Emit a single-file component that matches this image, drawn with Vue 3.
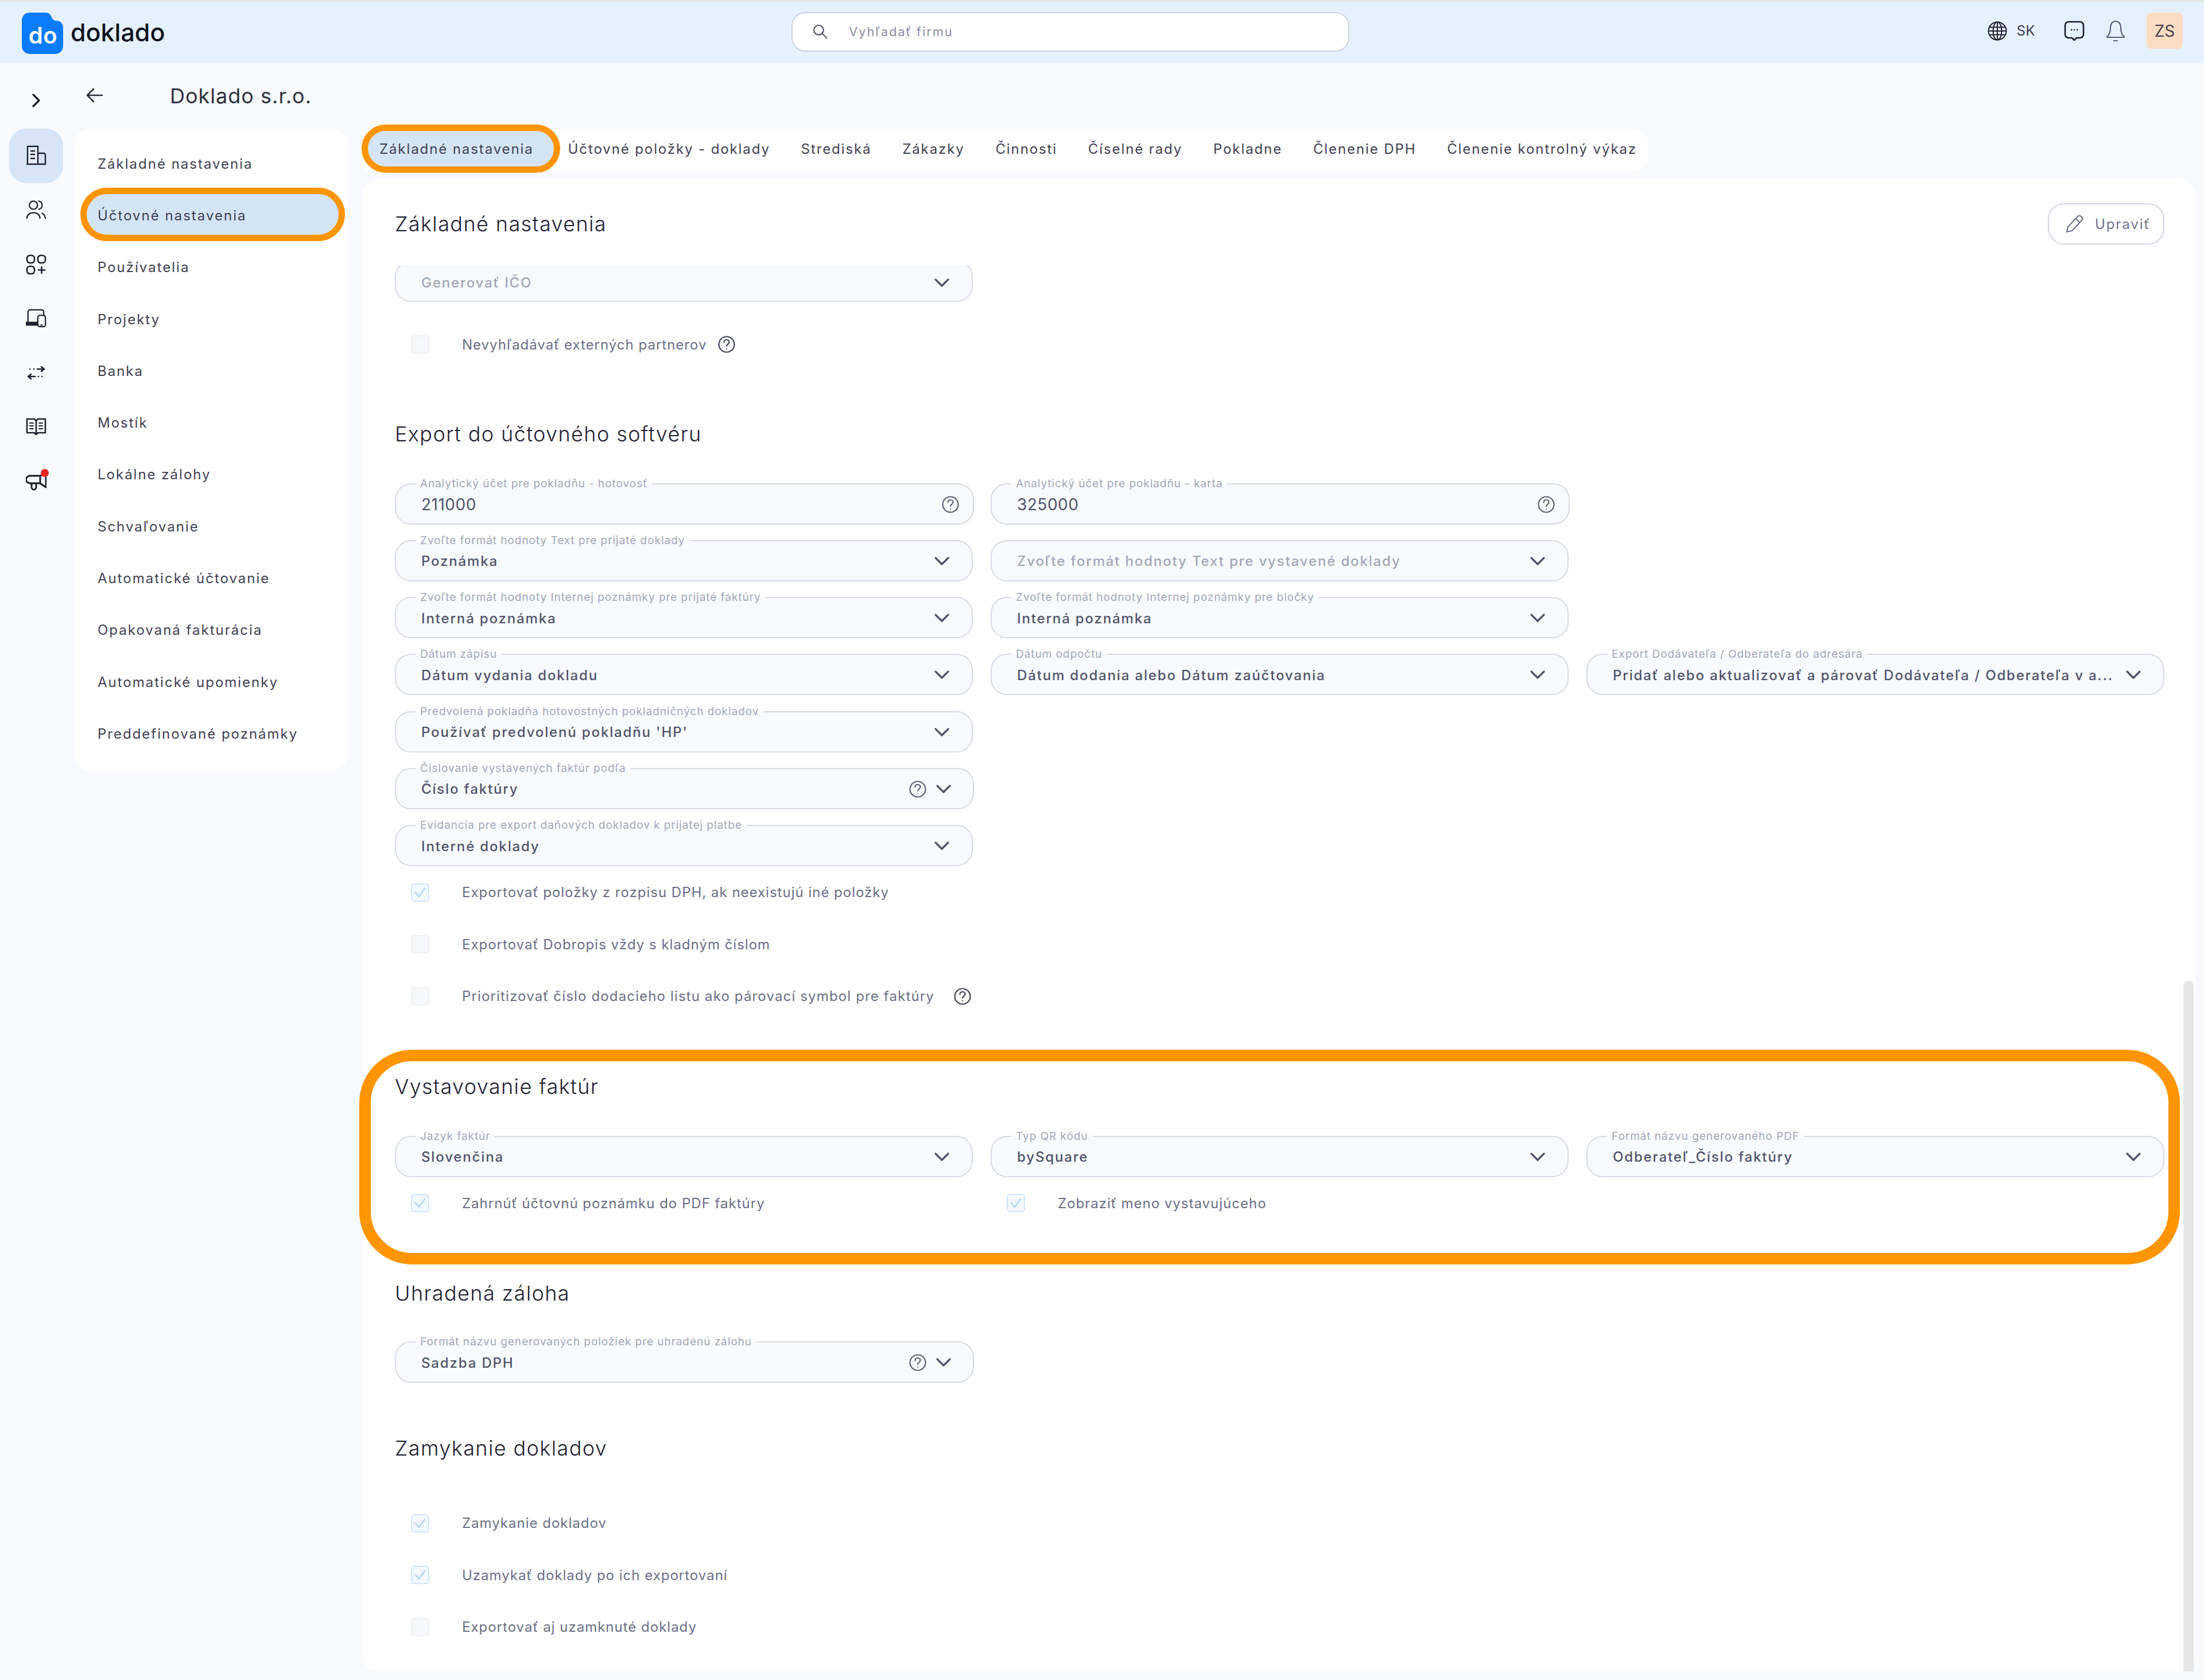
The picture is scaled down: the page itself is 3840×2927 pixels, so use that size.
<script setup>
const menu = ['Základné nastavenia','Účtovné nastavenia','Používatelia','Projekty','Banka','Mostík','Lokálne zálohy','Schvaľovanie','Automatické účtovanie','Opakovaná fakturácia','Automatické upomienky','Preddefinované poznámky']
const tabs = ['Základné nastavenia','Účtovné položky - doklady','Strediská','Zákazky','Činnosti','Číselné rady','Pokladne','Členenie DPH','Členenie kontrolný výkaz']
const sections = [
  { key:'a', rows:[[{ value:'Generovať IČO', muted:true }]], checks:[[{ text:'Nevyhľadávať externých partnerov', help:true }]] },
  { key:'b', title:'Export do účtovného softvéru', rows:[
    [{ label:'Analytický účet pre pokladňu - hotovosť', value:'211000', input:true, help:true },{ label:'Analytický účet pre pokladňu - karta', value:'325000', input:true, help:true }],
    [{ label:'Zvoľte formát hodnoty Text pre prijaté doklady', value:'Poznámka' },{ value:'Zvoľte formát hodnoty Text pre vystavené doklady', muted:true }],
    [{ label:'Zvoľte formát hodnoty Internej poznámky pre prijaté faktúry', value:'Interná poznámka' },{ label:'Zvoľte formát hodnoty Internej poznámky pre bločky', value:'Interná poznámka' }],
    [{ label:'Dátum zápisu', value:'Dátum vydania dokladu' },{ label:'Dátum odpočtu', value:'Dátum dodania alebo Dátum zaúčtovania' },{ label:'Export Dodávateľa / Odberateľa do adresára', value:'Pridať alebo aktualizovať a párovať Dodávateľa / Odberateľa v a...' }],
    [{ label:'Predvolená pokladňa hotovostných pokladničných dokladov', value:"Používať predvolenú pokladňu 'HP'" }],
    [{ label:'Číslovanie vystavených faktúr podľa', value:'Číslo faktúry', help:true }],
    [{ label:'Evidancia pre export daňových dokladov k prijatej platbe', value:'Interné doklady' }],
  ], checks:[
    [{ text:'Exportovať položky z rozpisu DPH, ak neexistujú iné položky', on:true }],
    [{ text:'Exportovať Dobropis vždy s kladným číslom' }],
    [{ text:'Prioritizovať číslo dodacieho listu ako párovací symbol pre faktúry', help:true, far:true }],
  ]},
  { key:'c', title:'Vystavovanie faktúr', rows:[
    [{ label:'Jazyk faktúr', value:'Slovenčina' },{ label:'Typ QR kódu', value:'bySquare' },{ label:'Formát názvu generovaného PDF', value:'Odberateľ_Číslo faktúry' }],
  ], checks:[[{ text:'Zahrnúť účtovnú poznámku do PDF faktúry', on:true },{ text:'Zobraziť meno vystavujúceho', on:true }]] },
  { key:'d', title:'Uhradená záloha', rows:[[{ label:'Formát názvu generovaných položiek pre uhradenú zálohu', value:'Sadzba DPH', help:true }]], checks:[] },
  { key:'e', title:'Zamykanie dokladov', rows:[], checks:[
    [{ text:'Zamykanie dokladov', on:true }],[{ text:'Uzamykať doklady po ich exportovaní', on:true }],[{ text:'Exportovať aj uzamknuté doklady' }],
  ]},
]
</script>

<template>
  <div class="page">
    <header class="top">
      <div class="brand">
        <div class="logo">
          <svg viewBox="0 0 72 72"><path fill="#0b7bfb" d="M14 0h28c6 0 8 4 10 8 2 4 4 6 8 6 7 0 12 5 12 12v32c0 8-6 14-14 14H14C6 72 0 66 0 58V14C0 6 6 0 14 0z"/></svg>
          <span>do</span>
        </div>
        <span class="brand-name">doklado</span>
      </div>
      <div class="search">
        <svg class="search-ico" viewBox="0 0 32 32" fill="none" stroke="#4b4e63" stroke-width="2.4" stroke-linecap="round"><circle cx="13" cy="13" r="9.5"/><path d="M20 20l9 9"/></svg>
        <span>Vyhľadať firmu</span>
      </div>
      <div class="top-right">
        <svg class="globe" viewBox="0 0 34 34" fill="none" stroke="#20222e" stroke-width="2"><circle cx="17" cy="17" r="15.5"/><ellipse cx="17" cy="17" rx="7.5" ry="15.5"/><path d="M17 1.5v31M3 10.5h28M3 23.5h28M1.5 17h31"/></svg>
        <span class="lang">SK</span>
        <svg class="chat" viewBox="0 0 36 36" fill="none" stroke="#1c1e29" stroke-width="2.6" stroke-linejoin="round"><path d="M8 2h20a6 6 0 0 1 6 6v16a6 6 0 0 1-6 6h-6l-4 4-4-4H8a6 6 0 0 1-6-6V8a6 6 0 0 1 6-6z"/><path d="M13 16h.1M18 16h.1M23 16h.1" stroke-linecap="round"/></svg>
        <svg class="bell" viewBox="0 0 34 38" fill="none" stroke="#5d6178" stroke-width="2.2" stroke-linejoin="round" stroke-linecap="round"><path d="M17 2c-6 0-9 5-9 11 0 8-2 13-6 16v1h30v-1c-4-3-6-8-6-16 0-6-3-11-9-11z"/><path d="M14 36h6"/></svg>
        <div class="avatar">ZS</div>
      </div>
    </header>

    <div class="below">
      <nav class="rail">
        <svg class="rail-chev" viewBox="0 0 20 30" fill="none" stroke="#1f2130" stroke-width="3.4" stroke-linecap="round" stroke-linejoin="round"><path d="M5 5l10 10L5 25"/></svg>
        <div class="rail-item active">
          <svg viewBox="0 0 36 36" fill="none" stroke="#1f2130" stroke-width="2.4" stroke-linejoin="round"><path d="M3 33V2h18v31" fill="#e4ecf9"/><path d="M21 14h10a3 3 0 0 1 3 3v16M1 33h34"/><path d="M9 10h6M9 16h6M9 23h6" stroke-linecap="round"/></svg>
        </div>
        <div class="rail-item">
          <svg viewBox="0 0 38 36" fill="none" stroke="#1f2130" stroke-width="2.4" stroke-linecap="round"><circle cx="14" cy="9" r="7.5"/><path d="M24 1.500c4 1 6 4 6 7.500s-2 6.500-6 7.500M2 33c0-6 5-10 12-10s12 4 12 10M30 24c3 1 5 4 6 9"/></svg>
        </div>
        <div class="rail-item">
          <svg viewBox="0 0 36 36" fill="none" stroke="#1f2130" stroke-width="2.6" stroke-linecap="round"><rect x="2" y="2" width="13" height="13" rx="5"/><rect x="21" y="2" width="13" height="13" rx="5"/><rect x="2" y="21" width="13" height="13" rx="5"/><path d="M27.500 22v11M22 27.500h11"/></svg>
        </div>
        <div class="rail-item">
          <svg viewBox="0 0 38 36" fill="none" stroke="#1f2130" stroke-width="2.4" stroke-linejoin="round"><path d="M4 25V6a4 4 0 0 1 4-4h21a4 4 0 0 1 4 4v6"/><rect x="1" y="25" width="21" height="5" fill="#1f2130"/><rect x="22" y="12" width="14" height="21" rx="4" fill="#f8fafd"/><path d="M27 30h4"/></svg>
        </div>
        <div class="rail-item">
          <svg viewBox="0 0 36 36" fill="none" stroke="#1f2130" stroke-width="2.6" stroke-linecap="round" stroke-linejoin="round"><path d="M7 11h.1M14 11h.1M20 11h11M27 7l5 4-5 4M28 24h.1M22 24h.1M16 24H5M9 20l-5 4 5 4"/></svg>
        </div>
        <div class="rail-item book">
          <svg viewBox="0 0 36 32" fill="none" stroke="#1f2130" stroke-width="2.6" stroke-linejoin="round" stroke-linecap="round"><path d="M2 3h13l3 3 3-3h13v24H21l-3 3-3-3H2zM18 6v24"/><path d="M7 10h6M7 15h6M7 20h6M23 10h6M23 15h6M23 20h6" stroke-width="2.2"/></svg>
        </div>
        <div class="rail-item">
          <svg viewBox="0 0 36 36" fill="none" stroke="#14151f" stroke-width="2.8" stroke-linejoin="round" stroke-linecap="round"><path d="M7 8h18v13H7a6.500 6.500 0 0 1 0-13zM25 8l10-4v24l-10-7M10 21v7a4 4 0 0 0 8 0v-7"/></svg>
          <span class="dot"></span>
        </div>
      </nav>

      <div class="work">
        <div class="crumb">
          <svg class="back" viewBox="0 0 30 28" fill="none" stroke="#2a2c3a" stroke-width="2.6" stroke-linecap="round" stroke-linejoin="round"><path d="M28 14H3M13 3L2 14l11 11"/></svg>
          <span class="crumb-title">Doklado s.r.o.</span>
        </div>
        <div class="panes">
          <aside class="menu">
            <div v-for="(m, i) in menu" :key="m" class="menu-item" :class="{ on: i === 1 }">{{ m }}</div>
          </aside>
          <div class="right">
            <div class="tabs">
              <div v-for="(t, i) in tabs" :key="t" class="tab" :class="{ on: i === 0 }">{{ t }}</div>
            </div>
            <main class="card">
              <div class="card-head">
                <h1 class="h">Základné nastavenia</h1>
                <button class="edit">
                  <svg viewBox="0 0 32 32" fill="none" stroke="#6f7288" stroke-width="2.2" stroke-linejoin="round"><path d="M22 3c2-2 5-1 7 1s2 4 0 6L12 28l-9 2 2-9z"/><path d="M19 7l6 6"/></svg>
                  <span>Upraviť</span>
                </button>
              </div>
              <div class="scroll">
                <section v-for="s in sections" :key="s.key" class="sec" :class="'sec-' + s.key">
                  <h2 v-if="s.title" class="h sec-title">{{ s.title }}</h2>
                  <div v-if="s.rows.length" class="rows">
                    <div v-for="(r, ri) in s.rows" :key="ri" class="row">
                      <fieldset v-for="f in r" :key="f.value + f.label" class="field" :class="{ 'is-input': f.input, 'has-help': f.help }">
                        <legend v-if="f.label">{{ f.label }}</legend>
                        <legend v-else class="no-label"></legend>
                        <span class="val" :class="{ muted: f.muted, big: f.input }">{{ f.value }}</span>
                        <svg v-if="f.help" class="help" viewBox="0 0 30 30" fill="none" stroke="#5c5f75" stroke-width="2.2" stroke-linecap="round"><circle cx="15" cy="15" r="13.500"/><path d="M10.500 11.500c0-3 2-4.500 4.500-4.500s4.500 1.600 4.500 4c0 3.500-4.500 3.600-4.500 7"/><path d="M15 22.500v.1"/></svg>
                        <svg v-if="!f.input" class="chev" viewBox="0 0 28 18" fill="none" stroke="#4f5268" stroke-width="3.2" stroke-linecap="round" stroke-linejoin="round"><path d="M3 3l11 11L25 3"/></svg>
                      </fieldset>
                    </div>
                  </div>
                  <div v-if="s.checks.length" class="checks">
                    <div v-for="(r, ri) in s.checks" :key="ri" class="row">
                      <div v-for="c in r" :key="c.text" class="check">
                        <span class="box" :class="{ on: c.on }">
                          <svg v-if="c.on" viewBox="0 0 28 28" fill="none" stroke="#b5d5fb" stroke-width="2.6" stroke-linecap="round" stroke-linejoin="round"><path d="M6 14l6 7L22 7"/></svg>
                        </span>
                        <span class="check-text" :class="{ far: c.far }">{{ c.text }}</span>
                        <svg v-if="c.help" class="help check-help" :class="{ far: c.far }" viewBox="0 0 30 30" fill="none" stroke="#3e4155" stroke-width="2.2" stroke-linecap="round"><circle cx="15" cy="15" r="13.500"/><path d="M10.500 11.500c0-3 2-4.500 4.500-4.500s4.500 1.600 4.500 4c0 3.500-4.500 3.600-4.500 7"/><path d="M15 22.500v.1"/></svg>
                      </div>
                    </div>
                  </div>
                </section>
              </div>
              <div class="scrollbar"></div>
              <div class="callout"></div>
            </main>
          </div>
        </div>
      </div>
    </div>
  </div>
</template>

<style scoped>
.page {
  width: 3840px; height: 2927px; overflow: hidden; display: flex; flex-direction: column;
  background: #f8fafd; font-family: Inter, "Liberation Sans", sans-serif; color: #3a3c4c; box-sizing: border-box;
}
.top {
  height: 110px; flex: none; background: #e6f1fe; border-top: 3px solid #e4e6e4; box-sizing: border-box;
  display: grid; grid-template-columns: 1379px 972px 1fr; align-items: center;
}
.brand { display: flex; align-items: center; padding-left: 38px; gap: 13px; }
.logo {
  width: 72px; height: 72px; margin-top: 2px; position: relative; color: #fff; font-size: 40px; font-weight: 600;
  display: flex; align-items: center; justify-content: center; box-sizing: border-box; padding: 7px 0 0 2px;
}
.logo svg { position: absolute; inset: 0; width: 72px; height: 72px; }
.logo span { position: relative; letter-spacing: .5px; }
.brand-name { font-size: 43px; font-weight: 500; color: #10131f; letter-spacing: 0; margin-top: -2px; }
.search {
  height: 69px; box-sizing: border-box; background: #fff; border: 2px solid #cfd3de; border-radius: 24px; display: flex; align-items: center;
  font-size: 22px; color: #8b8e9f; letter-spacing: 1.9px; padding-left: 34px; gap: 36px; margin-top: -3px;
}
.search-ico { width: 28px; height: 28px; }
.top-right { display: flex; align-items: center; justify-content: flex-end; padding-right: 37px; margin-top: -6px; }
.globe { width: 34px; height: 34px; }
.lang { font-size: 24px; margin: 0 50px 0 16px; color: #3a3c4c; letter-spacing: .5px; }
.chat { width: 36px; height: 36px; margin-right: 37px; }
.bell { width: 34px; height: 38px; margin-right: 37px; }
.avatar {
  width: 63px; height: 63px; background: #fddcc4; border-radius: 8px; display: flex; align-items: center; justify-content: center;
  font-size: 28px; color: #45434a;
}
.below { flex: 1; display: flex; min-height: 0; }
.rail { width: 130px; flex: none; box-sizing: border-box; padding: 0 0 0 16px; display: flex; flex-direction: column; }
.rail-chev { width: 20px; height: 30px; margin: 50px 0 34px 37px; }
.rail-item { width: 94px; height: 94.7px; display: flex; align-items: center; justify-content: center; position: relative; flex: none; }
.rail-item svg { width: 36px; height: 36px; }
.rail-item.active { background: #d8e5f8; border-radius: 30px; }
.book svg { margin-top: -4px; }
.dot { position: absolute; width: 14px; height: 14px; border-radius: 50%; background: #e8262a; top: 25px; left: 55px; }
.work { flex: 1; display: flex; flex-direction: column; min-width: 0; }
.crumb { height: 114px; flex: none; display: flex; align-items: center; box-sizing: border-box; padding: 0 0 0 20px; margin-top: 0; }
.back { width: 30px; height: 28px; margin-top: -2px; }
.crumb-title { margin-left: 116px; font-size: 36px; color: #30323f; letter-spacing: 1px; }
.panes { flex: 1; display: flex; gap: 27px; min-height: 0; padding-right: 15px; padding-bottom: 15px; }
.menu {
  width: 475px; height: 1119px; flex: none; background: #fff; border-radius: 28px; box-sizing: border-box; padding: 16px 0 0 0;
}
.menu-item {
  height: 90.3px; display: flex; align-items: center; padding-left: 40px; font-size: 24px; letter-spacing: 2px; color: #3f4150; position: relative; isolation: isolate;
}
.menu-item.on::before {
  content: ""; position: absolute; z-index: -1; left: 10px; right: 4px; top: -3px; height: 93px; box-sizing: border-box;
  background: #d6e4f8; border: 11px solid #ff9500; border-radius: 47px;
}
.right { flex: 1; display: flex; flex-direction: column; gap: 14px; min-width: 0; }
.tabs {
  height: 74px; flex: none; width: 2240px; background: #fff; border-radius: 0 28px 28px 0; display: flex; align-items: center; box-sizing: border-box; padding-bottom: 3px;
}
.tab { font-size: 24px; letter-spacing: 1.9px; color: #3f4150; padding: 0 26.9px; white-space: nowrap; }
.tab.on {
  height: 84px; box-sizing: border-box; display: flex; align-items: center; margin: -3px -13px -2px -2px; padding: 0 35px 0 20px;
  background: #d6e4f8; border: 11px solid #ff9500; border-radius: 42px;
}
.card { flex: 1; position: relative; background: #fff; border-radius: 28px; display: flex; flex-direction: column; min-height: 0; padding: 0 54px 0 56px; }
.card-head { height: 150px; flex: none; display: flex; justify-content: space-between; padding-top: 42px; box-sizing: border-box; }
.h { margin: 0; font-size: 36px; line-height: 50px; font-weight: 300; color: #1f2130; letter-spacing: 1.4px; }
.card-head .h { line-height: 72px; }
.edit {
  width: 203px; height: 72px; box-sizing: border-box; background: #fff; border: 2px solid #d3d5e0; border-radius: 28px; display: flex; align-items: center;
  padding: 0 0 0 28px; gap: 20px; font: inherit; font-size: 24px; color: #6f7288; letter-spacing: 1.9px;
}
.edit svg { width: 32px; height: 32px; flex: none; }
.scroll { flex: 1; overflow: hidden; min-height: 0; }
.sec { margin-top: 87px; }
.sec-a { margin-top: -17px; }
.sec-b { margin-top: 85px; }
.sec-e { margin-top: 89px; }
.sec-title { margin-bottom: 52px; }
.sec-d .sec-title { margin-bottom: 50px; }
.sec-e .sec-title { margin-bottom: 60px; }
.sec-a .checks { margin-top: 29px; }
.sec-a .field { padding-bottom: 4px; }
.rows { display: flex; flex-direction: column; gap: 18.3px; }
.row { display: grid; grid-template-columns: repeat(3, 1fr); column-gap: 31px; }
.field {
  margin: 0; min-width: 0; height: 81px; box-sizing: border-box; border: 2px solid #d8dae5; border-radius: 28px; background: #f8fafd;
  padding: 0 38px 7px 44px; display: flex; align-items: center; gap: 16px;
}
.field.has-help { margin-right: -2px; padding-right: 37px; }
.field.is-input { margin-right: -2px; padding-right: 24px; }
legend {
  font-size: 19px; line-height: 20px; height: 20px; color: #a3a6b7; padding: 0 8px; margin-left: -10px; white-space: nowrap; letter-spacing: .95px;
}
legend.no-label { padding: 0; margin: 0; width: 0; }
.val { flex: 1; min-width: 0; font-size: 24px; letter-spacing: 1.85px; font-weight: 500; color: #50536a; white-space: nowrap; overflow: hidden; }
.val.muted { color: #a3a6b7; }
.val.big { font-size: 28px; letter-spacing: .5px; font-weight: 400; }
.help { width: 30px; height: 30px; flex: none; }
.chev { width: 28px; height: 18px; flex: none; }
.check { height: 90.5px; display: flex; align-items: center; padding-left: 28px; }
.box { width: 32px; height: 32px; box-sizing: border-box; border-radius: 6px; border: 2px solid #eef0f3; background: #f7f8fa; flex: none; margin-right: 57px; }
.box.on { border-color: #d3e5fd; background: #f3f8ff; }
.box svg { display: block; width: 28px; height: 28px; }
.check-text { font-size: 24px; letter-spacing: 1px; color: #6b6e85; white-space: nowrap; }
.check-text.far { letter-spacing: 1.15px; }
.check-help { margin-left: 20px; }
.check-help.far { margin-left: 34px; }
.scrollbar { position: absolute; left: 3172px; top: 1397px; bottom: 0; width: 18px; background: #e6e6e6; border-radius: 9px 9px 0 0; }
.callout {
  position: absolute; left: -6px; top: 1517px; width: 3172px; height: 374px; box-sizing: border-box;
  border: 20px solid #ff9500; border-radius: 92px; pointer-events: none;
}
</style>

<style>
html, body { margin: 0; background: #f8fafd; }
</style>
